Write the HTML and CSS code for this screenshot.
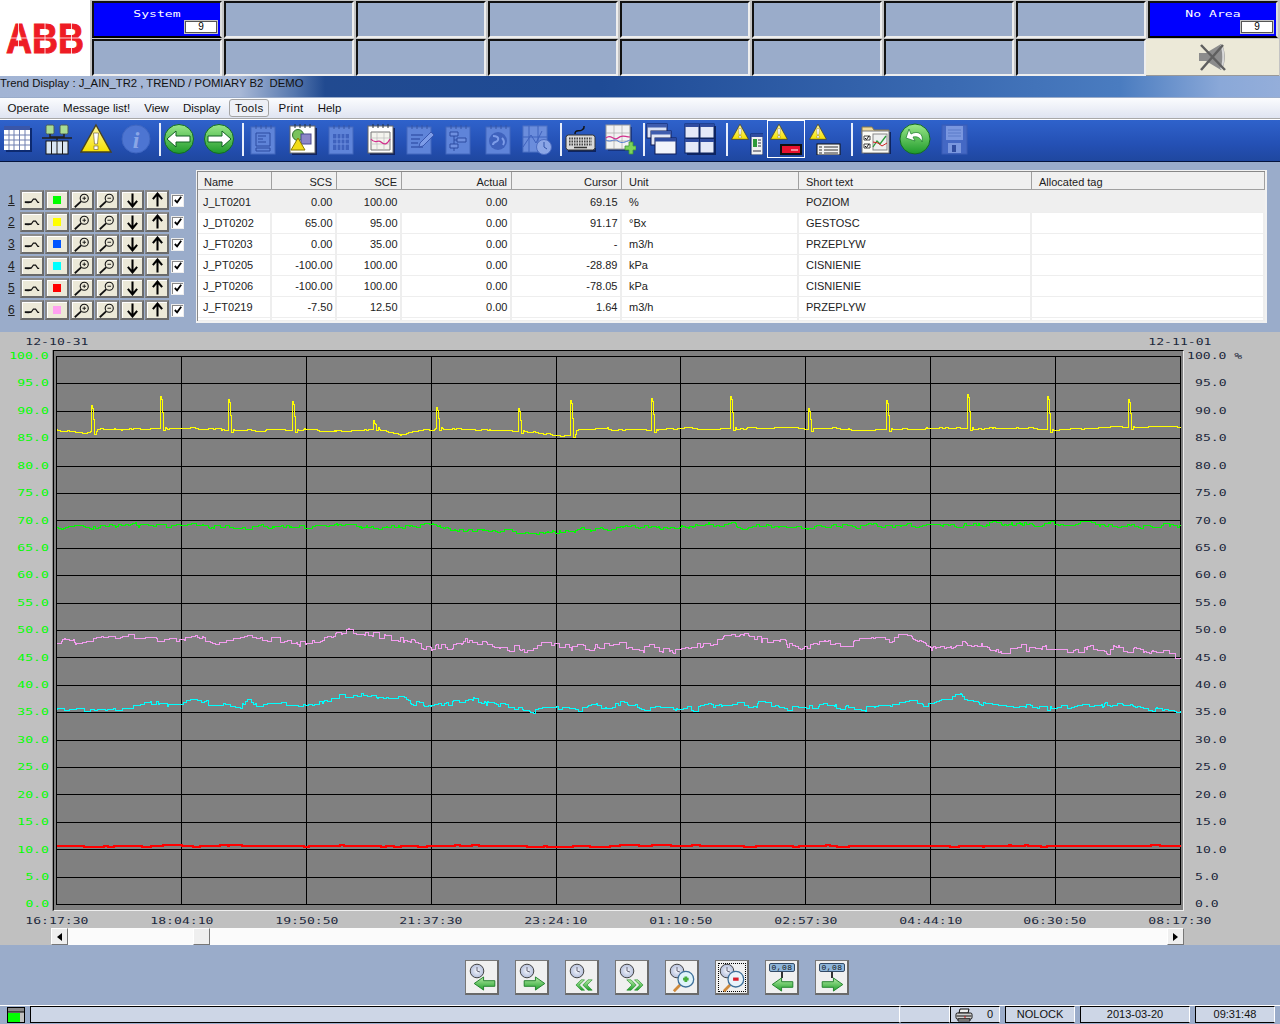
FILE: index.html
```html
<!DOCTYPE html>
<html lang="en">
<head>
<meta charset="utf-8">
<title>Trend Display</title>
<link rel="stylesheet" href="styles.css">
</head>
<body>
<svg class="defs" width="0" height="0" aria-hidden="true">
  <defs>
    <linearGradient id="gGreen" x1="0" y1="0" x2="0" y2="1"><stop offset="0" stop-color="#9be88a"/><stop offset="1" stop-color="#1e9a2a"/></linearGradient>
    <linearGradient id="gWarn" x1="0" y1="0" x2="0" y2="1"><stop offset="0" stop-color="#fff9a0"/><stop offset="1" stop-color="#f5e000"/></linearGradient>
    <linearGradient id="gArrow" x1="0" y1="0" x2="0" y2="1"><stop offset="0" stop-color="#b5eca5"/><stop offset="1" stop-color="#1f9f2a"/></linearGradient>
    <radialGradient id="gClock"><stop offset="0" stop-color="#f4f6fc"/><stop offset="1" stop-color="#b4bfdc"/></radialGradient>

    <symbol id="i-grid" viewBox="0 0 32 32"><rect x="4" y="5" width="26" height="24" fill="#0d2a70"/><rect x="2" y="3" width="26" height="24" fill="#fff"/><rect x="2" y="3" width="26" height="4" fill="#3a56a8"/><path d="M7 7v20M12 7v20M17.500 7v20M23 7v20M2 12h26M2 17h26M2 22h26" stroke="#6f7fb0" stroke-width="1"/></symbol>
    <symbol id="i-net" viewBox="0 0 32 32"><rect x="5" y="2" width="8" height="9" rx="1.500" fill="#a9dc93" stroke="#4c5d57"/><rect x="19" y="2" width="8" height="9" rx="1.500" fill="#a9dc93" stroke="#4c5d57"/><path d="M9 11v3h14v-3M16 14v3M1 15h30" stroke="#222" stroke-width="1.500" fill="none"/><rect x="5" y="18" width="22" height="13" fill="#d9e6f2" stroke="#1a1a1a"/><path d="M10.500 18v13M16 18v13M21.500 18v13" stroke="#1a1a1a"/></symbol>
    <symbol id="i-warn" viewBox="0 0 32 32"><path d="M16 2 31 29H1Z" fill="url(#gWarn)" stroke="#4a4420" stroke-width="1.400"/><path d="M13.500 10h5l-1 11h-3Z" fill="#fff" stroke="#7a6a40" stroke-width=".7"/><rect x="14" y="23" width="4" height="3.500" fill="#fff" stroke="#7a6a40" stroke-width=".7"/></symbol>
    <symbol id="i-info" viewBox="0 0 32 32"><circle cx="16" cy="16" r="14" fill="#4d75d2" stroke="#3f66c0"/><text x="16" y="25" class="svg-i">i</text></symbol>
    <symbol id="i-left" viewBox="0 0 32 32"><circle cx="16" cy="16" r="14.500" fill="url(#gGreen)" stroke="#136c23"/><path d="M4 16 13 8v5h14v6H13v5Z" fill="#fff" stroke="#116122"/></symbol>
    <symbol id="i-right" viewBox="0 0 32 32"><circle cx="16" cy="16" r="14.500" fill="url(#gGreen)" stroke="#136c23"/><path d="M28 16 19 8v5H5v6h14v5Z" fill="#fff" stroke="#116122"/></symbol>
    <symbol id="i-book-doc" viewBox="0 0 32 32"><rect x="4" y="4" width="24" height="27" fill="#5f84d9" stroke="#4468bd"/><path d="M9 2v4M14 2v4M19 2v4M24 2v4" stroke="#3454a6"/><path d="M9 10h14v13H9ZM9 25h14v3H9Z" fill="none" stroke="#2d4ba0"/><path d="M11 13h8M11 16h5M11 19h8" stroke="#2d4ba0"/></symbol>
    <symbol id="i-book-shape" viewBox="0 0 32 32"><rect x="6" y="5" width="25" height="27" fill="#11235e"/><rect x="4" y="3" width="25" height="27" fill="#fff" stroke="#666"/><path d="M9 1v4M14 1v4M19 1v4M24 1v4" stroke="#234"/><circle cx="12" cy="12" r="5.500" fill="#7ac25c" stroke="#2f6f2f"/><rect x="15" y="11" width="10" height="10" fill="#8c86c8" stroke="#4a4a90"/><path d="M12 15 19 27H5Z" fill="#f3dc16" stroke="#8a7a00"/></symbol>
    <symbol id="i-book-grid" viewBox="0 0 32 32"><rect x="4" y="4" width="24" height="27" fill="#5f84d9" stroke="#4468bd"/><path d="M9 2v4M14 2v4M19 2v4M24 2v4" stroke="#3454a6"/><rect x="8" y="11" width="16" height="16" fill="#3f62bd"/><path d="M12 11v16M16 11v16M20 11v16M8 16h16M8 21h16" stroke="#6f90e0"/></symbol>
    <symbol id="i-book-chart" viewBox="0 0 32 32"><rect x="6" y="5" width="25" height="27" fill="#11235e"/><rect x="4" y="3" width="25" height="27" fill="#fff" stroke="#666"/><path d="M9 1v4M14 1v4M19 1v4M24 1v4" stroke="#234"/><path d="M7 9h19v18H7Z" fill="#f4f4ee" stroke="#777"/><path d="M7 15h19M7 21h19M13 9v18M20 9v18" stroke="#bbb" stroke-width=".7"/><path d="M7 16c4 6 7 0 10 3s6 3 9-3" fill="none" stroke="#d2308c" stroke-width="1.300"/></symbol>
    <symbol id="i-book-pen" viewBox="0 0 32 32"><rect x="4" y="4" width="24" height="27" fill="#5f84d9" stroke="#4468bd"/><path d="M9 2v4M14 2v4M19 2v4M24 2v4" stroke="#3454a6"/><path d="M8 12h12M8 16h9M8 20h7M8 24h12" stroke="#3957af" stroke-width="1.500"/><path d="M17 20 28 9l3 3-11 11-4 1Z" fill="#7d9ce8" stroke="#3957af"/></symbol>
    <symbol id="i-book-flow" viewBox="0 0 32 32"><rect x="4" y="4" width="24" height="27" fill="#5f84d9" stroke="#4468bd"/><path d="M9 2v4M14 2v4M19 2v4M24 2v4" stroke="#3454a6"/><path d="M8 9h8v4H8ZM15 15h9v4h-9ZM8 21h8v4H8ZM12 13v8M12 17h3M12 25v3" fill="#6f90e0" stroke="#2d4ba0"/></symbol>
    <symbol id="i-book-globe" viewBox="0 0 32 32"><rect x="4" y="4" width="24" height="27" fill="#5f84d9" stroke="#4468bd"/><path d="M9 2v4M14 2v4M19 2v4M24 2v4" stroke="#3454a6"/><circle cx="16" cy="18" r="9" fill="#3f62bd"/><path d="M11 13c3 0 6 1 5 4s-5 1-5 5M20 15c2 2 3 4 1 7" fill="none" stroke="#7d9ce8" stroke-width="2"/></symbol>
    <symbol id="i-book-clock" viewBox="0 0 32 32"><rect x="2" y="3" width="24" height="26" fill="#6b8ddc" stroke="#4f72c4"/><path d="M2 24 10 12l5 8 6-12M8 3v26M17 3v26M2 14h24" fill="none" stroke="#3f62bd"/><circle cx="23" cy="24" r="7.500" fill="#8ba6e6" stroke="#4b6cc2"/><path d="M23 19v5l3 2" fill="none" stroke="#3354a8"/></symbol>
    <symbol id="i-keyboard" viewBox="0 0 32 32"><path d="M10 11c0-5 4-2 7-4s2-3 2-4" fill="none" stroke="#111" stroke-width="1.500"/><rect x="3" y="25" width="28" height="4" fill="#0e2460"/><rect x="1" y="12" width="29" height="15" rx="2.500" fill="#d9d9d9" stroke="#333"/><path d="M4 15.500h23M4 18.500h23M4 21.500h23" stroke="#444" stroke-width="2" stroke-dasharray="1.500 1"/><path d="M9 24.500h13" stroke="#333" stroke-width="1.500"/></symbol>
    <symbol id="i-chart-add" viewBox="0 0 32 32"><rect x="4" y="4" width="24" height="24" fill="#11235e" opacity=".6"/><rect x="2" y="2" width="24" height="24" fill="#f2f2f2" stroke="#999"/><path d="M10 2v24M18 2v24M2 10h24M2 18h24" stroke="#aaa" stroke-width=".7"/><path d="M2 15c5-5 8 4 12 0s7-1 12-1" fill="none" stroke="#d2308c" stroke-width="1.200"/><path d="M2 17c5 3 8-2 12 1s7 1 12-1" fill="none" stroke="#4c7ad0" stroke-width="1"/><path d="M21 23h4v-4h4v4h3v4h-3v4h-4v-4h-4Z" fill="#7cd35a" stroke="#3c9a35" stroke-width=".8"/></symbol>
    <symbol id="i-windows" viewBox="0 0 32 32"><rect x="2" y="1" width="20" height="14" fill="#dbe2f5" stroke="#111c54"/><rect x="2" y="1" width="20" height="3.500" fill="#3f5cae"/><rect x="6" y="8" width="20" height="14" fill="#e2e7f6" stroke="#111c54"/><rect x="6" y="8" width="20" height="3.500" fill="#3f5cae"/><rect x="10" y="15" width="21" height="16" fill="#f2f4fb" stroke="#111c54"/><rect x="10" y="15" width="21" height="3.500" fill="#2f4ca0"/></symbol>
    <symbol id="i-tiles" viewBox="0 0 32 32"><rect x="3" y="3" width="29" height="29" fill="#0e2460"/><g fill="#e4e9f8" stroke="#0e2460"><rect x="1" y="1" width="14" height="14"/><rect x="16" y="1" width="14" height="14"/><rect x="1" y="16" width="14" height="14"/><rect x="16" y="16" width="14" height="14"/></g><g fill="#2f4ca0"><rect x="1" y="1" width="14" height="3"/><rect x="16" y="1" width="14" height="3"/><rect x="1" y="16" width="14" height="3"/><rect x="16" y="16" width="14" height="3"/></g></symbol>
    <symbol id="i-warn-doc" viewBox="0 0 32 32"><svg x="0" y="0" width="18" height="18" viewBox="0 0 32 32"><use href="#i-warn"/></svg><rect x="20" y="11" width="12" height="21" fill="#f1f1f1" stroke="#0e2460"/><rect x="20" y="11" width="12" height="3" fill="#2f4ca0"/><rect x="22" y="16" width="4" height="8" fill="#2f9a3a"/><path d="M27 17h3M27 20h3M27 23h3M22 28h8" stroke="#334"/></symbol>
    <symbol id="i-warn-red" viewBox="0 0 32 32"><svg x="0" y="0" width="18" height="18" viewBox="0 0 32 32"><use href="#i-warn"/></svg><rect x="10" y="21" width="22" height="11" fill="#111"/><rect x="12" y="23" width="18" height="7" fill="#e8112e"/><path d="M21 27h7" stroke="#fff"/></symbol>
    <symbol id="i-warn-list" viewBox="0 0 32 32"><svg x="0" y="0" width="18" height="18" viewBox="0 0 32 32"><use href="#i-warn"/></svg><rect x="8" y="21" width="23" height="11" fill="#f2f2f2" stroke="#111"/><path d="M10 24h3M15 24h14M10 27h3M15 27h14M10 30h3M15 30h14" stroke="#333" stroke-width="1"/></symbol>
    <symbol id="i-folder-chart" viewBox="0 0 32 32"><path d="M2 4h10l2 3h15v4H2Z" fill="#efd99a" stroke="#8a7a48"/><rect x="4" y="9" width="27" height="22" fill="#0e2460"/><rect x="2" y="8" width="27" height="22" fill="#fbfbf6" stroke="#777"/><path d="M4 13h6v4H4ZM4 21h6v4H4Z" fill="#fff" stroke="#444"/><path d="M5 15l1.500 1.500L9 13M5 23l1.500 1.500L9 21" fill="none" stroke="#111"/><rect x="13" y="11" width="14" height="16" fill="#eef0f0" stroke="#888"/><path d="M13 24l4-6 3 3 6-8" fill="none" stroke="#2c9a3a" stroke-width="1.300"/><path d="M13 19l5 1 4 3 5-3" fill="none" stroke="#d02020"/></symbol>
    <symbol id="i-back" viewBox="0 0 32 32"><circle cx="16" cy="16" r="15" fill="url(#gGreen)" stroke="#146c24"/><path d="M12 11c7-4 13 0 11 8-1-4-5-6-9-5l2 4-9-3 3-9Z" fill="#fff" stroke="#1a7a2a" stroke-width=".7"/></symbol>
    <symbol id="i-save" viewBox="0 0 32 32"><rect x="4" y="2" width="25" height="29" fill="#4468c4" stroke="#3a5cb5"/><rect x="8" y="3" width="17" height="14" fill="#7a97df"/><path d="M10 7h13M10 10h13M10 13h13" stroke="#5a7ac8"/><rect x="10" y="20" width="13" height="10" fill="#7a97df"/><rect x="14" y="22" width="4" height="7" fill="#2f4ca0"/></symbol>

    <symbol id="b-wave" viewBox="0 0 20 14"><path d="M2 9 6 9.500 9 9 11.500 5.500 14 5.500 16.500 9 18 9M2 8.500h7" fill="none" stroke="#111" stroke-width="1.300"/></symbol>
    <symbol id="b-zoom-in" viewBox="0 0 20 16"><circle cx="12.500" cy="5.500" r="4.500" fill="none" stroke="#111" stroke-width="1.200"/><path d="M9 9 2 15.500" stroke="#111" stroke-width="2"/><path d="M10.500 5.500h4M12.500 3.500v4" stroke="#111"/></symbol>
    <symbol id="b-zoom-out" viewBox="0 0 20 16"><circle cx="12.500" cy="5.500" r="4.500" fill="none" stroke="#111" stroke-width="1.200"/><path d="M9 9 2 15.500" stroke="#111" stroke-width="2"/><path d="M10.500 5.500h4" stroke="#111"/></symbol>
    <symbol id="b-down" viewBox="0 0 14 16"><path d="M7 1v13M2 9l5 6 5-6" fill="none" stroke="#000" stroke-width="2.200"/></symbol>
    <symbol id="b-up" viewBox="0 0 14 16"><path d="M7 15V2M2 7l5-6 5 6" fill="none" stroke="#000" stroke-width="2.200"/></symbol>

    <symbol id="n-clock" viewBox="0 0 16 16"><circle cx="8" cy="8" r="6.800" fill="url(#gClock)" stroke="#444"/><path d="M8 4v4l3 1" fill="none" stroke="#667"/></symbol>
    <symbol id="n-left" viewBox="0 0 24 16"><path d="M1 8 11 1v4h12v6H11v4Z" fill="url(#gArrow)" stroke="#1f7f2a"/></symbol>
    <symbol id="n-right" viewBox="0 0 24 16"><path d="M23 8 13 1v4H1v6h12v4Z" fill="url(#gArrow)" stroke="#1f7f2a"/></symbol>
    <symbol id="n-dleft" viewBox="0 0 22 14"><path d="M1 7 7 1h4L5 7l6 6H7ZM9 7l6-6h5l-6 6 6 6h-5Z" fill="url(#gArrow)" stroke="#2a8f30" stroke-width=".8"/></symbol>
    <symbol id="n-dright" viewBox="0 0 22 14"><path d="M21 7 15 1h-4l6 6-6 6h4ZM13 7 7 1H2l6 6-6 6h5Z" fill="url(#gArrow)" stroke="#2a8f30" stroke-width=".8"/></symbol>
    <symbol id="n-lens-plus" viewBox="0 0 26 26"><path d="M2 24 11 15" stroke="#cf8a3c" stroke-width="3"/><circle cx="15" cy="11" r="8.500" fill="#dff3fa" stroke="#3d6f9a" stroke-width="1.400"/><path d="M12 11h6M15 8v6" stroke="#46ae3c" stroke-width="3"/></symbol>
    <symbol id="n-lens-minus" viewBox="0 0 26 26"><path d="M2 24 11 15" stroke="#cf8a3c" stroke-width="3"/><circle cx="15" cy="11" r="8.500" fill="#e8f3fa" stroke="#3d6f9a" stroke-width="1.400"/><path d="M12 11h6" stroke="#d9202c" stroke-width="3.500"/></symbol>
  </defs>
</svg>

<header class="head">
  <div class="logo">
    <svg class="logo-svg" viewBox="0 0 86 44" role="img" aria-label="ABB">
      <text x="1" y="37" class="logo-text" textLength="78" lengthAdjust="spacingAndGlyphs">ABB</text>
      <path d="M13.500 6v32M40 6v32M66.500 6v32M0 22h82" stroke="#fff" stroke-width=".8"/>
    </svg>
  </div>
  <div class="cell cell-on"><span class="cell-name">System</span><span class="cell-num">9</span></div>
  <div class="cell"></div><div class="cell"></div><div class="cell"></div><div class="cell"></div><div class="cell"></div><div class="cell"></div><div class="cell"></div>
  <div class="cell cell-on cell-last"><span class="cell-name">No Area</span><span class="cell-num">9</span></div>
  <div class="cell"></div><div class="cell"></div><div class="cell"></div><div class="cell"></div><div class="cell"></div><div class="cell"></div><div class="cell"></div><div class="cell"></div>
  <div class="mute">
    <svg class="mute-svg" viewBox="0 0 32 30"><path d="M2 11h7L24 2c5 4 5 22 0 26L9 19H2Z" fill="#8c8c8c"/><path d="M24 3c3 5 3 19 0 24" fill="none" stroke="#d8d8d8" stroke-width="2"/><path d="M4 3 28 28M4 28 26 3" stroke="#5f5f5f" stroke-width="2.500"/></svg>
  </div>
</header>

<div class="titlebar">Trend Display : J_AIN_TR2 , TREND / POMIARY B2&nbsp; DEMO</div>

<nav class="menu">
  <span class="menu-item">Operate</span>
  <span class="menu-item">Message list!</span>
  <span class="menu-item">View</span>
  <span class="menu-item">Display</span>
  <span class="menu-item menu-active">Tools</span>
  <span class="menu-item menu-print">Print</span>
  <span class="menu-item">Help</span>
</nav>

<div class="toolbar">
  <svg class="tool"><use href="#i-grid"/></svg>
  <svg class="tool"><use href="#i-net"/></svg>
  <svg class="tool"><use href="#i-warn"/></svg>
  <svg class="tool"><use href="#i-info"/></svg>
  <span class="sep"></span>
  <svg class="tool"><use href="#i-left"/></svg>
  <svg class="tool"><use href="#i-right"/></svg>
  <span class="sep"></span>
  <svg class="tool"><use href="#i-book-doc"/></svg>
  <svg class="tool"><use href="#i-book-shape"/></svg>
  <svg class="tool"><use href="#i-book-grid"/></svg>
  <svg class="tool"><use href="#i-book-chart"/></svg>
  <svg class="tool"><use href="#i-book-pen"/></svg>
  <svg class="tool"><use href="#i-book-flow"/></svg>
  <svg class="tool"><use href="#i-book-globe"/></svg>
  <svg class="tool"><use href="#i-book-clock"/></svg>
  <span class="sep"></span>
  <svg class="tool"><use href="#i-keyboard"/></svg>
  <svg class="tool"><use href="#i-chart-add"/></svg>
  <span class="sep"></span>
  <svg class="tool tool-pull"><use href="#i-windows"/></svg>
  <svg class="tool"><use href="#i-tiles"/></svg>
  <span class="sep sep-push"></span>
  <svg class="tool"><use href="#i-warn-doc"/></svg>
  <span class="tool-selected"><svg class="tool"><use href="#i-warn-red"/></svg></span>
  <svg class="tool"><use href="#i-warn-list"/></svg>
  <span class="sep sep-push sep-wide"></span>
  <svg class="tool"><use href="#i-folder-chart"/></svg>
  <svg class="tool"><use href="#i-back"/></svg>
  <svg class="tool"><use href="#i-save"/></svg>
</div>

<section class="legend">
  <div class="pens">
    <div class="pen"><span class="pen-no">1</span><span class="pb"><svg class="pi-wave"><use href="#b-wave"/></svg></span><span class="pb"><span class="swatch sw-lime"></span></span><span class="pb"><svg class="pi-zoom"><use href="#b-zoom-in"/></svg></span><span class="pb"><svg class="pi-zoom"><use href="#b-zoom-out"/></svg></span><span class="pb"><svg class="pi-arrow"><use href="#b-down"/></svg></span><span class="pb"><svg class="pi-arrow"><use href="#b-up"/></svg></span><span class="check"><svg class="check-svg" viewBox="0 0 11 11"><path d="M2 5.500 4.500 8 9 2" fill="none" stroke="#000" stroke-width="2"/></svg></span></div>
    <div class="pen"><span class="pen-no">2</span><span class="pb"><svg class="pi-wave"><use href="#b-wave"/></svg></span><span class="pb"><span class="swatch sw-yellow"></span></span><span class="pb"><svg class="pi-zoom"><use href="#b-zoom-in"/></svg></span><span class="pb"><svg class="pi-zoom"><use href="#b-zoom-out"/></svg></span><span class="pb"><svg class="pi-arrow"><use href="#b-down"/></svg></span><span class="pb"><svg class="pi-arrow"><use href="#b-up"/></svg></span><span class="check"><svg class="check-svg" viewBox="0 0 11 11"><path d="M2 5.500 4.500 8 9 2" fill="none" stroke="#000" stroke-width="2"/></svg></span></div>
    <div class="pen"><span class="pen-no">3</span><span class="pb"><svg class="pi-wave"><use href="#b-wave"/></svg></span><span class="pb"><span class="swatch sw-blue"></span></span><span class="pb"><svg class="pi-zoom"><use href="#b-zoom-in"/></svg></span><span class="pb"><svg class="pi-zoom"><use href="#b-zoom-out"/></svg></span><span class="pb"><svg class="pi-arrow"><use href="#b-down"/></svg></span><span class="pb"><svg class="pi-arrow"><use href="#b-up"/></svg></span><span class="check"><svg class="check-svg" viewBox="0 0 11 11"><path d="M2 5.500 4.500 8 9 2" fill="none" stroke="#000" stroke-width="2"/></svg></span></div>
    <div class="pen"><span class="pen-no">4</span><span class="pb"><svg class="pi-wave"><use href="#b-wave"/></svg></span><span class="pb"><span class="swatch sw-cyan"></span></span><span class="pb"><svg class="pi-zoom"><use href="#b-zoom-in"/></svg></span><span class="pb"><svg class="pi-zoom"><use href="#b-zoom-out"/></svg></span><span class="pb"><svg class="pi-arrow"><use href="#b-down"/></svg></span><span class="pb"><svg class="pi-arrow"><use href="#b-up"/></svg></span><span class="check"><svg class="check-svg" viewBox="0 0 11 11"><path d="M2 5.500 4.500 8 9 2" fill="none" stroke="#000" stroke-width="2"/></svg></span></div>
    <div class="pen"><span class="pen-no">5</span><span class="pb"><svg class="pi-wave"><use href="#b-wave"/></svg></span><span class="pb"><span class="swatch sw-red"></span></span><span class="pb"><svg class="pi-zoom"><use href="#b-zoom-in"/></svg></span><span class="pb"><svg class="pi-zoom"><use href="#b-zoom-out"/></svg></span><span class="pb"><svg class="pi-arrow"><use href="#b-down"/></svg></span><span class="pb"><svg class="pi-arrow"><use href="#b-up"/></svg></span><span class="check"><svg class="check-svg" viewBox="0 0 11 11"><path d="M2 5.500 4.500 8 9 2" fill="none" stroke="#000" stroke-width="2"/></svg></span></div>
    <div class="pen"><span class="pen-no">6</span><span class="pb"><svg class="pi-wave"><use href="#b-wave"/></svg></span><span class="pb"><span class="swatch sw-pink"></span></span><span class="pb"><svg class="pi-zoom"><use href="#b-zoom-in"/></svg></span><span class="pb"><svg class="pi-zoom"><use href="#b-zoom-out"/></svg></span><span class="pb"><svg class="pi-arrow"><use href="#b-down"/></svg></span><span class="pb"><svg class="pi-arrow"><use href="#b-up"/></svg></span><span class="check"><svg class="check-svg" viewBox="0 0 11 11"><path d="M2 5.500 4.500 8 9 2" fill="none" stroke="#000" stroke-width="2"/></svg></span></div>
  </div>
  <div class="table-wrap">
    <table class="data">
      <colgroup><col class="c-name"><col class="c-scs"><col class="c-sce"><col class="c-act"><col class="c-cur"><col class="c-unit"><col class="c-short"><col></colgroup>
      <thead><tr><th>Name</th><th class="r">SCS</th><th class="r">SCE</th><th class="r">Actual</th><th class="r">Cursor</th><th class="t">Unit</th><th class="t">Short text</th><th class="t">Allocated tag</th></tr></thead>
      <tbody>
        <tr class="sel"><td>J_LT0201</td><td class="r">0.00</td><td class="r">100.00</td><td class="r">0.00</td><td class="r">69.15</td><td class="t">%</td><td class="t">POZIOM</td><td></td></tr>
        <tr><td>J_DT0202</td><td class="r">65.00</td><td class="r">95.00</td><td class="r">0.00</td><td class="r">91.17</td><td class="t">°Bx</td><td class="t">GESTOSC</td><td></td></tr>
        <tr><td>J_FT0203</td><td class="r">0.00</td><td class="r">35.00</td><td class="r">0.00</td><td class="r">-</td><td class="t">m3/h</td><td class="t">PRZEPLYW</td><td></td></tr>
        <tr><td>J_PT0205</td><td class="r">-100.00</td><td class="r">100.00</td><td class="r">0.00</td><td class="r">-28.89</td><td class="t">kPa</td><td class="t">CISNIENIE</td><td></td></tr>
        <tr><td>J_PT0206</td><td class="r">-100.00</td><td class="r">100.00</td><td class="r">0.00</td><td class="r">-78.05</td><td class="t">kPa</td><td class="t">CISNIENIE</td><td></td></tr>
        <tr><td>J_FT0219</td><td class="r">-7.50</td><td class="r">12.50</td><td class="r">0.00</td><td class="r">1.64</td><td class="t">m3/h</td><td class="t">PRZEPLYW</td><td></td></tr>
        <tr class="stub"><td></td><td></td><td></td><td></td><td></td><td></td><td></td><td></td></tr>
      </tbody>
    </table>
  </div>
</section>

<section class="chart">
  <div class="dates"><span>12-10-31</span><span>12-11-01</span></div>
  <div class="plot-row">
    <div class="axis axis-left">
      <span>100.0</span><span>95.0</span><span>90.0</span><span>85.0</span><span>80.0</span><span>75.0</span><span>70.0</span><span>65.0</span><span>60.0</span><span>55.0</span><span>50.0</span><span>45.0</span><span>40.0</span><span>35.0</span><span>30.0</span><span>25.0</span><span>20.0</span><span>15.0</span><span>10.0</span><span>5.0</span><span>0.0</span>
    </div>
    <div class="plot">
      <svg id="plot" class="plot-svg" viewBox="54 351 1129 559">
        <g id="grid" class="gridlines"></g>
        <polyline id="t-yellow" class="trace"/>
        <polyline id="t-green" class="trace"/>
        <polyline id="t-pink" class="trace"/>
        <polyline id="t-cyan" class="trace"/>
        <polyline id="t-red" class="trace"/>
      </svg>
    </div>
    <div class="axis axis-right">
      <span class="first">100.0 %</span><span>95.0</span><span>90.0</span><span>85.0</span><span>80.0</span><span>75.0</span><span>70.0</span><span>65.0</span><span>60.0</span><span>55.0</span><span>50.0</span><span>45.0</span><span>40.0</span><span>35.0</span><span>30.0</span><span>25.0</span><span>20.0</span><span>15.0</span><span>10.0</span><span>5.0</span><span>0.0</span>
    </div>
  </div>
  <div class="times"><span>16:17:30</span><span>18:04:10</span><span>19:50:50</span><span>21:37:30</span><span>23:24:10</span><span>01:10:50</span><span>02:57:30</span><span>04:44:10</span><span>06:30:50</span><span>08:17:30</span></div>
  <div class="scroll">
    <span class="sb-btn"><span class="tri tri-left"></span></span>
    <span class="sb-thumb"></span>
    <span class="sb-btn sb-end"><span class="tri tri-right"></span></span>
  </div>
</section>

<section class="nav-panel">
  <div class="nb"><svg class="nb-clock"><use href="#n-clock"/></svg><svg class="nb-arrow"><use href="#n-left"/></svg></div>
  <div class="nb"><svg class="nb-clock"><use href="#n-clock"/></svg><svg class="nb-arrow"><use href="#n-right"/></svg></div>
  <div class="nb"><svg class="nb-clock"><use href="#n-clock"/></svg><svg class="nb-double"><use href="#n-dleft"/></svg></div>
  <div class="nb"><svg class="nb-clock"><use href="#n-clock"/></svg><svg class="nb-double"><use href="#n-dright"/></svg></div>
  <div class="nb"><svg class="nb-clock"><use href="#n-clock"/></svg><svg class="nb-lens"><use href="#n-lens-plus"/></svg></div>
  <div class="nb nb-focus"><svg class="nb-clock"><use href="#n-clock"/></svg><svg class="nb-lens"><use href="#n-lens-minus"/></svg></div>
  <div class="nb"><span class="tag">0,08</span><span class="tag-post"></span><svg class="nb-arrow nb-arrow-tag"><use href="#n-left"/></svg></div>
  <div class="nb"><span class="tag">0,08</span><span class="tag-post"></span><svg class="nb-arrow nb-arrow-tag"><use href="#n-right"/></svg></div>
</section>

<footer class="status">
  <svg class="st-icon" viewBox="0 0 18 16"><rect x=".5" y=".5" width="17" height="15" fill="#c0c0c0" stroke="#000"/><rect x="1" y="1" width="16" height="4" fill="#888"/><path d="M1 5h16" stroke="#000"/><rect x="1" y="6" width="12" height="9" fill="#00ff00"/></svg>
  <div class="st st-main"></div>
  <div class="st st-blank"></div>
  <div class="st st-print">
    <svg class="printer" viewBox="0 0 18 14"><path d="M5 1h9l-1 4H4Z" fill="#eee" stroke="#111"/><rect x="1" y="5" width="16" height="6" rx="1.500" fill="#cfcfcf" stroke="#111"/><path d="M2 8h14" stroke="#111"/><path d="M3 11h12v2H3Z" fill="#ddd" stroke="#111"/><path d="M9 9h2" stroke="#d01010"/></svg>
    <span>0</span>
  </div>
  <div class="st st-lock">NOLOCK</div>
  <div class="st st-date">2013-03-20</div>
  <div class="st st-time">09:31:48</div>
</footer>
<script src="script.js"></script>
</body>
</html>
```

FILE: styles.css
```css
* { box-sizing: border-box; }
html, body { margin: 0; padding: 0; }
body {
  width: 1280px;
  height: 1024px;
  overflow: hidden;
  background: #9aacca;
  font: 11.5px/1 "Liberation Sans", Arial, sans-serif;
  color: #111;
  display: flex;
  flex-direction: column;
}
.defs { position: absolute; }

/* header */
.head {
  height: 76px;
  flex: none;
  display: grid;
  grid-template-columns: 92px repeat(8, 132px) 1fr;
  grid-template-rows: 38px 38px;
  background: #c4c4c4;
}
.logo {
  grid-row: 1 / span 2;
  background: #fff;
  margin-right: 2px;
  display: flex;
  align-items: center;
  padding-left: 5px;
}
.logo-svg { width: 86px; height: 44px; display: block; flex: none; }
.logo-text {
  font: bold 43px "Liberation Sans", Arial, sans-serif;
  fill: #ee1c25;
  stroke: #ee1c25;
  stroke-width: 1;
}
.cell {
  margin: 1px 2px 0 0;
  background: #9aacca;
  border: 2px solid;
  border-color: #111 #eee #eee #111;
  position: relative;
}
.cell-on { background: #0000ff; border-color: #111 #ddd #000 #111; color: #fff; }
.cell-name {
  position: absolute;
  left: 0;
  right: 0;
  top: 6px;
  text-align: center;
  font: 9.500px/1 "DejaVu Sans Mono", monospace;
  transform: scaleX(1.38);
}
.cell-num {
  position: absolute;
  right: 2px;
  top: 17px;
  width: 34px;
  height: 14px;
  background: #fff;
  color: #000;
  border: 2px solid #c4c4c4;
  outline: 1px solid #555;
  outline-offset: -2px;
  font: 10px/10px "Liberation Sans", Arial, sans-serif;
  text-align: center;
}
.mute {
  margin: 1px 1px 0 -2px;
  background: #ece9d8;
  display: flex;
  align-items: center;
  justify-content: center;
  border-bottom: 1px solid #999;
}
.mute-svg { width: 32px; height: 30px; }

/* title + menu */
.titlebar {
  height: 21px;
  flex: none;
  font-size: 11.300px;
  line-height: 14px;
  color: #111;
  background: linear-gradient(90deg, #a2b4d4 0, #a8b8d6 240px, #5577ae 295px, #214a90 325px, #1f4b96 600px, #3a6ab2 950px, #4a7cc0 1120px, #8aa8d8 1220px, #94aeda 1280px);
}
.menu {
  height: 21px;
  flex: none;
  margin-top: 1px;
  background: linear-gradient(#fbfcfe, #dfe4f1);
  border-bottom: 1px solid #a8a8a8;
  display: flex;
  align-items: center;
  padding-left: 7.500px;
}
.menu-item { line-height: 14px; margin-right: 14px; white-space: nowrap; }
.menu-active {
  padding: 1px 5px;
  margin: 0 9px 0 -5.500px;
  border: 1px solid #a4a4a4;
  border-radius: 3px;
  background: #eef0f6;
  letter-spacing: .3px;
}
.menu-print { letter-spacing: .3px; }

/* toolbar */
.toolbar {
  height: 42px;
  flex: none;
  margin-top: 1px;
  padding: 0 0 3px 2px;
  display: flex;
  align-items: center;
  gap: 7.200px;
  background: linear-gradient(#2f62cb, #2450b4 60%, #1f479f);
  border-bottom: 1px solid #06153d;
  box-shadow: 0 -1px 0 #fff;
}
.tool { width: 32px; height: 32px; flex: none; display: block; }
.tool-pull { margin-left: -3px; }
.tool-selected { position: relative; flex: none; width: 32px; height: 32px; }
.tool-selected::after {
  content: "";
  position: absolute;
  inset: -3px;
  border: 1.500px solid #fff;
}
.svg-i {
  font: italic bold 24px "Liberation Serif", serif;
  fill: #8aa6e6;
  text-anchor: middle;
}
.sep { width: 2px; height: 33px; flex: none; background: #e8eefb; margin-right: -4.500px; }
.sep-push { margin-left: 3px; }
.sep-wide { margin-right: -.5px; }

/* legend */
.legend {
  height: 170px;
  flex: none;
  display: flex;
  align-items: flex-start;
  padding-top: 8px;
}
.pens { width: 196px; padding: 20px 0 0 8px; display: flex; flex-direction: column; gap: 2px; }
.pen { display: flex; align-items: center; height: 20px; }
.pen-no { width: 12px; font-size: 12px; text-decoration: underline; color: #222; }
.pb {
  width: 24px;
  height: 20px;
  margin-right: 1px;
  flex: none;
  background: #ece9d8;
  border: 2px solid;
  border-color: #8a8a8a #6a6a6a #6a6a6a #8a8a8a;
  box-shadow: inset 1px 1px 0 #fff;
  display: flex;
  align-items: center;
  justify-content: center;
}
.pi-wave { width: 18px; height: 13px; }
.pi-zoom { width: 18px; height: 15px; }
.pi-arrow { width: 13px; height: 16px; }
.swatch { width: 8px; height: 8px; display: block; }
.sw-lime { background: #00ff00; }
.sw-yellow { background: #ffff00; }
.sw-blue { background: #0055ff; }
.sw-cyan { background: #00ffff; }
.sw-red { background: #ff0000; }
.sw-pink { background: #ffa0f0; }
.check {
  width: 13px;
  height: 13px;
  margin-left: 1px;
  background: #fff;
  border: 1px solid #eee;
  box-shadow: inset 1px 1px 0 #888;
  display: flex;
  align-items: center;
  justify-content: center;
}
.check-svg { width: 10px; height: 10px; }

.table-wrap {
  width: 1071px;
  height: 153px;
  border: 1px solid #f2f2f2;
  border-width: 1px 2px 2px 1px;
  background: #fff;
  overflow: hidden;
}
.data {
  table-layout: fixed;
  width: 100%;
  border-collapse: separate;
  border-spacing: 0;
  border-top: 1px solid #888;
  border-left: 1px solid #888;
}
.c-name { width: 74px; }
.c-scs, .c-sce { width: 65px; }
.c-act, .c-cur { width: 110px; }
.c-unit { width: 177px; }
.c-short { width: 233px; }
.data th {
  height: 18px;
  background: #f0f0f0;
  font-weight: normal;
  text-align: left;
  padding: 3px 4px 0 6px;
  border-right: 1px solid #a0a0a0;
  border-bottom: 1px solid #a0a0a0;
  color: #222;
  font-size: 11px;
  white-space: nowrap;
}
.data th.r { text-align: right; }
.data td {
  height: 21px;
  padding: 0 2.500px 0 5px;
  border-right: 2px solid #eee;
  border-bottom: 1px solid #eee;
  font-size: 11px;
  color: #222;
  white-space: nowrap;
}
.data .r { text-align: right; }
.data .t { padding-left: 7px; }
.sel td { background: #efefef; border-right-color: #efefef; height: 23px; padding-top: 2px; }
.stub td { height: 3px; padding: 0; }

/* chart */
.chart {
  height: 613px;
  flex: none;
  background: #c0c0c0;
  display: flex;
  flex-direction: column;
  font: 9.500px/1 "DejaVu Sans Mono", monospace;
  color: #20283c;
}
.dates span, .times span, .axis span { display: inline-block; transform: scaleX(1.38); }
.dates {
  height: 18px;
  flex: none;
  display: flex;
  justify-content: space-between;
  padding: 5px 77px 0 34px;
}
.plot-row { height: 561px; flex: none; display: flex; }
.axis {
  display: flex;
  flex-direction: column;
  justify-content: space-between;
  padding: 1px 0 1.500px;
}
.axis span { height: 10px; line-height: 10px; }
.axis-left { width: 53px; padding-right: 4px; align-items: flex-end; color: #00ff00; }
.axis-left span { transform-origin: right center; }
.axis-right { flex: 1; padding-left: 3px; align-items: flex-start; color: #20283c; }
.axis-right span { transform-origin: left center; margin-left: 8px; }
.axis-right .first { margin-left: 0; }
.plot {
  width: 1131px;
  height: 561px;
  background: #808080;
  border: 1px solid;
  border-color: #000 #eee #eee #000;
  box-shadow: -1px 0 0 #8a8a8a;
}
.plot-svg { width: 1129px; height: 559px; display: block; }
.gridlines line { stroke: #000; stroke-width: 1; shape-rendering: crispEdges; }
.trace { fill: none; stroke-width: 1; shape-rendering: crispEdges; }
#t-yellow { stroke: #ffff00; }
#t-green { stroke: #00ff00; }
#t-pink { stroke: #f49cf0; }
#t-cyan { stroke: #00ffff; }
#t-red { stroke: #ff0000; stroke-width: 2; }

.times {
  height: 17px;
  flex: none;
  display: flex;
  justify-content: space-between;
  padding: 5px 77px 0 34px;
}
.scroll {
  height: 17px;
  flex: none;
  margin: 0 96px 0 51px;
  background-color: #fbfbfb;
  display: flex;
}
.sb-btn, .sb-thumb {
  width: 17px;
  height: 17px;
  background: #efefef;
  border: 1px solid;
  border-color: #fff #777 #777 #fff;
  display: flex;
  align-items: center;
  justify-content: center;
}
.sb-thumb { margin-left: 125px; }
.sb-end { margin-left: auto; }
.tri { width: 0; height: 0; border-style: solid; border-color: transparent; }
.tri-left { border-width: 4px 5px 4px 0; border-right-color: #000; }
.tri-right { border-width: 4px 0 4px 5px; border-left-color: #000; }

/* nav buttons */
.nav-panel {
  height: 60px;
  flex: none;
  display: flex;
  gap: 16px;
  padding: 15px 0 0 465px;
}
.nb {
  width: 34px;
  height: 35px;
  flex: none;
  background: #f0f0f0;
  border: 1px solid;
  border-color: #777 #6a6a6a #6a6a6a #777;
  border-width: 1px 2px 2px 1px;
  position: relative;
}
.nb-clock { position: absolute; left: 3px; top: 2px; width: 16px; height: 16px; }
.nb-arrow { position: absolute; left: 7px; top: 15px; width: 23px; height: 15px; }
.nb-double { position: absolute; left: 8px; top: 18px; width: 21px; height: 12px; }
.nb-lens { position: absolute; left: 6px; top: 8px; width: 24px; height: 24px; }
.nb-focus { outline: 1px dotted #000; outline-offset: -4px; }
.tag {
  position: absolute;
  left: 3px;
  top: 2px;
  width: 26px;
  height: 9px;
  border-radius: 2px;
  background: #8fb6da;
  border: 1px solid #334a66;
  color: #111;
  font: 8px/7px "Liberation Mono", monospace;
  text-align: center;
  letter-spacing: .5px;
}
.tag-post { position: absolute; left: 15px; top: 11px; width: 2px; height: 6px; background: #333; }
.nb-arrow-tag { left: 5px; top: 16px; }

/* status */
.status {
  height: 19px;
  flex: none;
  display: flex;
  gap: 5px;
  border-top: 1px solid #fff;
  background: #9aacca;
  padding-left: 7px;
  font-size: 11px;
  color: #111;
}
.st-icon { width: 18px; height: 16px; flex: none; margin: 1px 0 0; }
.st {
  height: 17px;
  background: #cdd6e6;
  border: 1px solid;
  border-color: #000 #fff #000 #000;
  text-align: center;
  line-height: 15px;
  flex: none;
}
.st-main { width: 870px; }
.st-blank { width: 50px; margin-left: -5px; border-left-color: #cdd6e6; }
.st-print {
  width: 50px;
  margin-left: -5px;
  display: flex;
  align-items: center;
  justify-content: space-between;
  padding: 0 6px 0 4px;
}
.printer { width: 18px; height: 14px; }
.st-lock { width: 70px; }
.st-date { width: 110px; }
.st-time { width: 80px; }
```

FILE: script.js
```javascript
(function () {
  var NS = 'http://www.w3.org/2000/svg';
  var X0 = 56, X1 = 1180;

  // Seeded generator so the recorded history draws the same every time.
  function rng(seed) {
    return function () {
      seed = (seed * 1664525 + 1013904223) >>> 0;
      return seed / 4294967296;
    };
  }

  function interp(a, x) {
    for (var i = 0; i < a.length - 1; i++) {
      if (x >= a[i][0] && x <= a[i + 1][0]) {
        var t = (x - a[i][0]) / (a[i + 1][0] - a[i][0]);
        return a[i][1] + (a[i + 1][1] - a[i][1]) * t;
      }
    }
    return a[a.length - 1][1];
  }

  function series(anchors, amp, hold, seed, spikes) {
    var r = rng(seed), pts = [], noise = 0, next = X0, lastY = null, spikeAt = {};
    (spikes || []).forEach(function (s) { spikeAt[s[0]] = s[1]; });
    for (var x = X0; x <= X1; x++) {
      if (x >= next) {
        noise = noise * 0.55 + (r() - 0.5) * amp;
        next = x + 1 + Math.floor(r() * hold);
      }
      var y = Math.round(interp(anchors, x) + noise);
      if (spikeAt[x] !== undefined) {
        var peak = spikeAt[x], mid = Math.round((peak + y) / 2);
        pts.push([x, lastY === null ? y : lastY], [x, peak], [x + 1, peak], [x + 1, peak + 3],
                 [x + 2, peak + 3], [x + 2, mid], [x + 3, mid], [x + 3, y + 2], [x + 5, y + 2], [x + 5, y - 1]);
        x += 5;
        lastY = y - 1;
        continue;
      }
      if (lastY !== null && lastY !== y) pts.push([x, lastY]);
      pts.push([x, y]);
      lastY = y;
    }
    return pts.map(function (p) { return (p[0] + 0.5) + ',' + (p[1] + 0.5); }).join(' ');
  }

  var grid = document.getElementById('grid');
  function line(x1, y1, x2, y2) {
    var l = document.createElementNS(NS, 'line');
    l.setAttribute('x1', x1); l.setAttribute('y1', y1);
    l.setAttribute('x2', x2); l.setAttribute('y2', y2);
    grid.appendChild(l);
  }
  [56, 181, 306, 431, 556, 680, 805, 930, 1055, 1180].forEach(function (x) {
    line(x + 0.5, 356, x + 0.5, 905);
  });
  for (var i = 0; i <= 20; i++) {
    var y = Math.round(356 + i * 27.4) + 0.5;
    line(56, y, 1181, y);
  }

  document.getElementById('t-yellow').setAttribute('points', series(
    [[56, 430], [85, 433], [100, 429], [161, 428], [229, 430], [293, 429], [350, 431], [374, 428], [400, 433], [437, 429],
     [519, 430], [549, 434], [570, 435], [578, 429], [652, 428], [731, 428], [809, 428], [887, 429], [968, 427], [1048, 429],
     [1129, 426], [1180, 427]],
    2, 8, 11,
    [[91, 405], [160, 396], [228, 399], [292, 401], [373, 420], [436, 407], [518, 408], [570, 400], [651, 398],
     [730, 396], [808, 408], [886, 400], [967, 394], [1047, 396], [1128, 399]]));

  document.getElementById('t-green').setAttribute('points', series(
    [[56, 528], [150, 525], [250, 527], [350, 526], [430, 526], [470, 530], [530, 533], [580, 530], [680, 525],
     [800, 526], [930, 525], [1020, 523], [1100, 524], [1180, 525]],
    4, 4, 23));

  document.getElementById('t-pink').setAttribute('points', series(
    [[56, 645], [100, 641], [180, 640], [230, 642], [300, 640], [348, 632], [400, 640], [430, 649], [470, 640],
     [520, 647], [600, 645], [680, 648], [740, 637], [800, 645], [860, 640], [910, 637], [930, 647], [960, 640],
     [1000, 649], [1050, 651], [1100, 648], [1140, 653], [1180, 656]],
    8, 7, 37));

  document.getElementById('t-cyan').setAttribute('points', series(
    [[56, 710], [100, 708], [150, 703], [240, 703], [300, 702], [350, 695], [400, 698], [430, 705], [470, 700],
     [530, 710], [575, 710], [620, 703], [680, 710], [730, 703], [800, 706], [900, 706], [960, 698], [1000, 706],
     [1060, 708], [1125, 702], [1180, 711]],
    6, 8, 51));

  document.getElementById('t-red').setAttribute('points', series(
    [[56, 845], [1180, 845]], 1.1, 9, 73));
})();
```
